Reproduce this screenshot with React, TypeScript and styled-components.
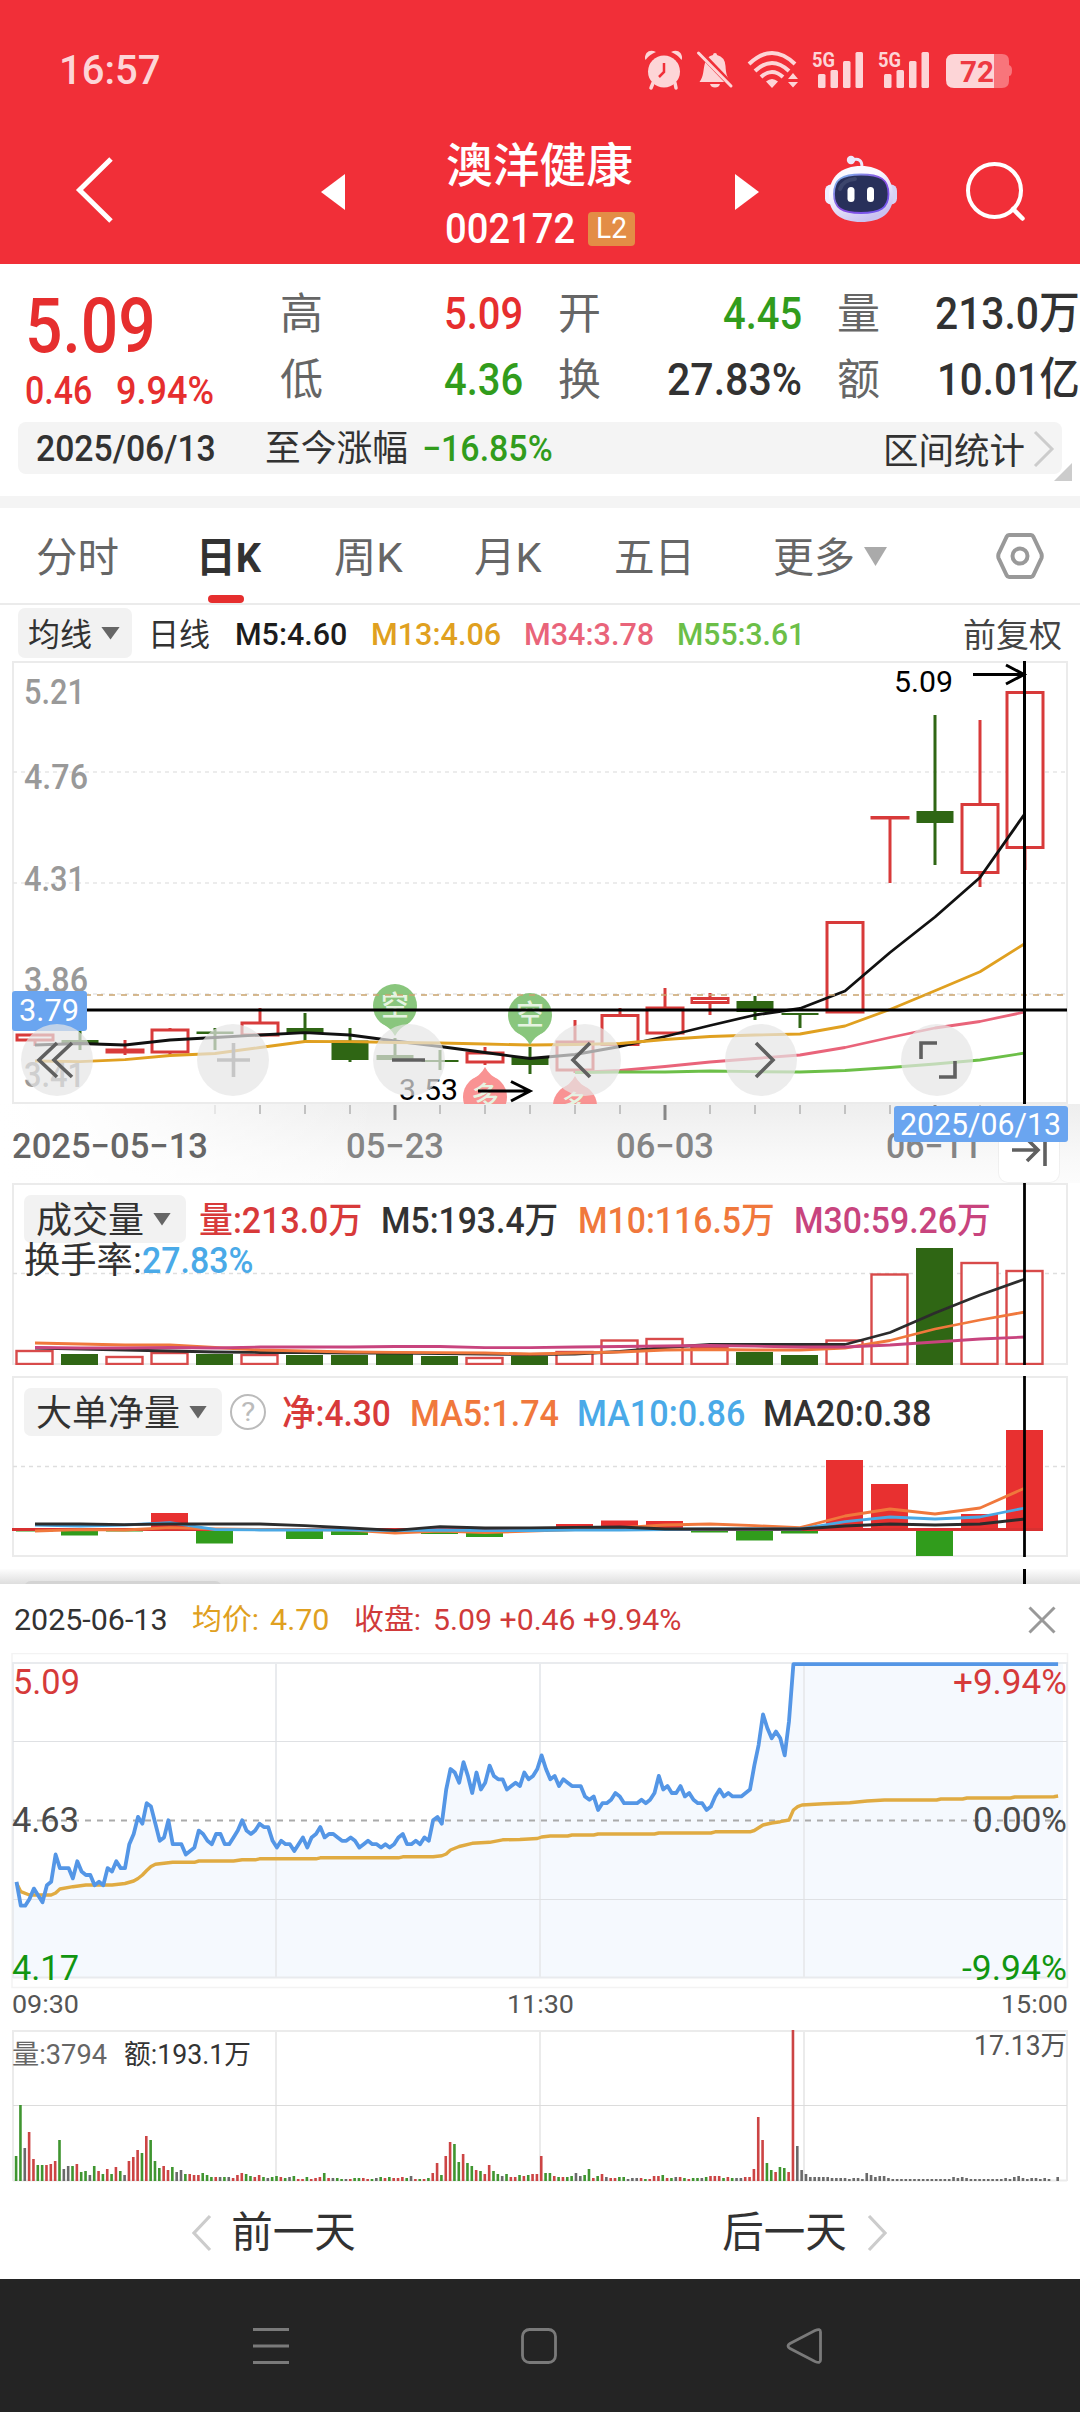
import React, { useLayoutEffect, useRef, useState } from 'react';
import styled, { createGlobalStyle } from 'styled-components';

const FONT = `Roboto, "Noto Sans CJK SC", sans-serif`;
const C = {
  red: '#e62e2e',
  line: '#d83a3a',
  green: '#319c1c',
  candle: '#2f6614',
  ink: '#323232',
  gray: '#666666',
  rule: '#ebebeb',
  blue: '#6aa5f0',
};

const Global = createGlobalStyle`
  html, body { margin: 0; padding: 0; background: #fff; }
  * { box-sizing: border-box; }
  svg { display: block; flex: none; }
`;

/* ---------- text that is condensed to a given advance width ---------- */

type FitProps = {
  w: number;
  size: number;
  weight?: number;
  color?: string;
  gap?: number;
  drop?: number;
  children: React.ReactNode;
};

const FitBox = styled.span<{ $w: number; $size: number; $gap: number; $drop: number }>`
  display: block;
  flex: none;
  width: ${(p) => p.$w}px;
  height: ${(p) => p.$size}px;
  margin-left: ${(p) => p.$gap}px;
  margin-top: ${(p) => p.$drop}px;
`;
const FitInk = styled.span<{ $size: number; $weight: number; $color: string }>`
  display: inline-block;
  font: ${(p) => p.$weight} ${(p) => p.$size}px/1 ${FONT};
  color: ${(p) => p.$color};
  white-space: pre;
  transform-origin: 0 50%;
`;

function Fit({ w, size, weight = 400, color = C.ink, gap = 0, drop = 0, children }: FitProps) {
  const ref = useRef<HTMLSpanElement>(null);
  const [scale, setScale] = useState(1);
  useLayoutEffect(() => {
    if (ref.current) setScale(w / ref.current.offsetWidth);
  }, [w, size, weight]);
  return (
    <FitBox $w={w} $size={size} $gap={gap} $drop={drop}>
      <FitInk ref={ref} $size={size} $weight={weight} $color={color} style={{ transform: `scaleX(${scale})` }}>
        {children}
      </FitInk>
    </FitBox>
  );
}

type LabelProps = {
  x: number;
  y: number;
  size: number;
  len: number;
  color: string;
  weight?: number;
  children: string;
};
const Label = ({ x, y, size, len, color, weight = 400, children }: LabelProps) => (
  <text
    x={x}
    y={y}
    fill={color}
    fontFamily={FONT}
    fontSize={size}
    fontWeight={weight}
    textLength={len}
    lengthAdjust="spacingAndGlyphs"
  >
    {children}
  </text>
);

/* ---------- layout ---------- */

const Page = styled.div`
  width: 1080px;
  height: 2412px;
  display: flex;
  flex-direction: column;
  overflow: hidden;
  background: #fff;
`;
const Header = styled.header`
  flex: none;
  height: 264px;
  background: #f12f38;
`;
const StatusBar = styled.div`
  height: 140px;
  padding: 0 52px 0 59px;
  display: flex;
  align-items: center;
  justify-content: space-between;
`;
const Toolbar = styled.div`
  height: 124px;
  padding: 0 50px 0 72px;
  display: flex;
  align-items: flex-start;
`;
const ToolIcon = styled.svg<{ $ml?: number; $mt: number }>`
  margin-left: ${(p) => p.$ml ?? 0}px;
  margin-top: ${(p) => p.$mt}px;
`;
const Title = styled.div`
  width: 190px;
  margin-left: 100px;
  display: flex;
  flex-direction: column;
`;
const CodeRow = styled.div`
  height: 34px;
  margin-top: 22px;
  display: flex;
  align-items: center;
`;
const Badge = styled.span`
  width: 48px;
  height: 34px;
  margin-left: 13px;
  border-radius: 4px;
  background: #e38d46;
  display: flex;
  align-items: center;
  justify-content: center;
`;

const Quote = styled.section`
  flex: none;
  height: 232px;
  display: grid;
  grid-template-columns: 280px 1fr;
  grid-template-rows: 158px 52px;
`;
const LastPrice = styled.div`
  padding: 24px 0 0 25px;
`;
const Change = styled.div`
  display: flex;
  margin-top: 8px;
`;
const Stats = styled.div`
  padding-top: 25px;
  display: grid;
  grid-template-columns: 278px 279px 243px;
  grid-auto-rows: 48px;
  row-gap: 18px;
`;
const Stat = styled.div<{ $pad: number }>`
  display: flex;
  align-items: center;
  justify-content: space-between;
  padding-right: ${(p) => p.$pad}px;
`;
const RangeBar = styled.div`
  grid-column: 1 / 3;
  margin: 0 18px;
  padding: 0 7px 0 18px;
  border-radius: 8px;
  background: #f4f4f4;
  display: flex;
  align-items: center;
`;
const Spring = styled.i`
  flex: 1;
`;
const Fold = styled.i`
  grid-column: 2;
  justify-self: end;
  width: 18px;
  height: 18px;
  margin: -11px 8px 0 0;
  background: #ccc;
  clip-path: polygon(100% 0, 100% 100%, 0 100%);
`;
const Separator = styled.div`
  flex: none;
  height: 12px;
  background: #f4f4f4;
`;

const Tabs = styled.nav`
  flex: none;
  height: 97px;
  padding-left: 36px;
  display: flex;
  border-bottom: 2px solid #ebebeb;
`;
const Tab = styled.div<{ $w: number }>`
  width: ${(p) => p.$w}px;
  padding-top: 30px;
  display: flex;
`;
const ActiveTab = styled(Tab)`
  flex-direction: column;
  &::after {
    content: '';
    width: 36px;
    height: 9px;
    margin: 16px 0 0 12px;
    border-radius: 5px;
    background: ${C.red};
  }
`;
const Caret = styled.i<{ $w: number; $h: number; $color: string; $ml: number; $mt?: number }>`
  flex: none;
  width: ${(p) => p.$w}px;
  height: ${(p) => p.$h}px;
  margin-left: ${(p) => p.$ml}px;
  margin-top: ${(p) => p.$mt ?? 0}px;
  background: ${(p) => p.$color};
  clip-path: polygon(0 0, 100% 0, 50% 100%);
`;
const MaRow = styled.div`
  flex: none;
  height: 56px;
  padding: 0 18px 0 18px;
  display: flex;
  align-items: center;
`;
const Picker = styled.button<{ $w: number; $h: number; $pad: number }>`
  flex: none;
  width: ${(p) => p.$w}px;
  height: ${(p) => p.$h}px;
  padding: 0 0 0 ${(p) => p.$pad}px;
  border: 0;
  border-radius: 7px;
  background: #f2f2f2;
  display: flex;
  align-items: center;
`;

const Panel = styled.section<{ $h: number; $mb?: number }>`
  flex: none;
  height: ${(p) => p.$h}px;
  margin-bottom: ${(p) => p.$mb ?? 0}px;
  display: grid;
  overflow: hidden;
  & > * {
    grid-area: 1 / 1;
  }
`;
const Tools = styled.div`
  align-self: end;
  height: 72px;
  margin: 0 0 8px 21px;
  display: flex;
  gap: 104px;
`;
const RoundButton = styled.button`
  width: 72px;
  height: 72px;
  padding: 0;
  border: 0;
  border-radius: 50%;
  background: rgba(229, 229, 229, 0.7);
`;
const Legend = styled.div`
  z-index: 1;
  padding: 12px 0 0 24px;
`;
const LegendRow = styled.div<{ $h: number }>`
  height: ${(p) => p.$h}px;
  display: flex;
  align-items: center;
`;
const Help = styled.span`
  width: 36px;
  height: 36px;
  margin-left: 8px;
  border: 2.5px solid #bbb;
  border-radius: 50%;
  display: flex;
  align-items: center;
  justify-content: center;
`;
const Peek = styled.div`
  flex: none;
  height: 15px;
  padding: 12px 54px 0 24px;
  overflow: hidden;
  background: linear-gradient(#fdfdfd, #dedede);
  display: flex;
  justify-content: space-between;
`;
const PeekTitle = styled.i`
  width: 198px;
  height: 20px;
  border-radius: 7px;
  background: #d4d4d4;
`;
const PeekLine = styled.i`
  width: 3px;
  height: 15px;
  margin-top: -12px;
  background: #000;
`;

const Sheet = styled.section`
  flex: none;
  height: 695px;
  background: #fff;
`;
const SheetHead = styled.div`
  height: 69px;
  padding: 0 24px 0 14px;
  display: flex;
  align-items: center;
`;
const DayNav = styled.div`
  height: 97px;
  padding: 5px 193px 0 192px;
  display: flex;
  align-items: center;
  justify-content: space-between;
`;
const DayButton = styled.button`
  padding: 0;
  border: 0;
  background: none;
  display: flex;
  align-items: center;
`;
const SystemBar = styled.footer`
  flex: 1;
  padding-left: 250px;
  padding-right: 255px;
  background: #242424;
  display: flex;
  align-items: center;
  justify-content: space-between;
`;

/* ---------- daily chart data ---------- */

const cx = (i: number) => 35 + 45 * i;
const path = (ys: number[], from = 0) => ys.map((y, i) => `${i ? 'L' : 'M'}${cx(i + from)} ${y}`).join('');

type Candle = [up: 0 | 1, top: number, bottom: number, high: number, low: number];
const candles: Candle[] = [
  [1, 1035, 1040, 1035, 1046], [0, 1040, 1043, 1025, 1050], [1, 1050, 1052, 1040, 1055],
  [1, 1030, 1052, 1028, 1055], [0, 1031.5, 1034, 1028, 1050], [1, 1023, 1035, 1008, 1035],
  [0, 1028, 1033, 1013, 1041], [0, 1040.5, 1060, 1028, 1062], [0, 1055, 1060, 1038, 1060],
  [0, 1060, 1062, 1050, 1070], [1, 1053, 1062, 1047, 1065], [0, 1057, 1065, 1047, 1074],
  [1, 1042, 1070, 1020, 1073], [1, 1015.5, 1044.5, 1008, 1044], [1, 1008, 1033, 988, 1033],
  [1, 998.5, 1002.5, 993, 1015], [0, 1001, 1012, 996, 1020], [0, 1013, 1015, 1013, 1028],
  [1, 922.5, 1012, 922.5, 1012], [1, 817.5, 818, 817, 883], [0, 811, 823, 715, 865],
  [1, 804.5, 872.5, 720, 887], [1, 692.5, 847.5, 692, 870],
];
const ma5 = [1045, 1043.5, 1045, 1040, 1037.5, 1035, 1032.7, 1035, 1041, 1046.5, 1052.5, 1058.5, 1054.5, 1046.5, 1036.5, 1025.5, 1015, 1008.5, 991, 952.5, 917, 877.5, 813.5];
const ma13 = [1061, 1061.7, 1059.7, 1055.5, 1053.5, 1047.5, 1041.5, 1041.7, 1042.5, 1043, 1044, 1045, 1044.5, 1043.5, 1039.5, 1036.5, 1035, 1034, 1026, 1009.5, 990.7, 971.7, 943.5];
const ma34 = [1072.5, 1070.5, 1066.5, 1062, 1058.5, 1055, 1047.5, 1037.5, 1028, 1021.5, 1012];
const ma55 = [1072.5, 1072, 1072, 1071, 1071.7, 1072, 1070.5, 1067.5, 1064, 1060, 1053];

const volumes: [0 | 1, number][] = [
  [1, 1350], [0, 1354], [1, 1356], [1, 1352], [0, 1354], [1, 1354], [0, 1355], [0, 1355], [0, 1354], [0, 1356],
  [1, 1357], [0, 1356], [1, 1351], [1, 1339.5], [1, 1338], [1, 1347], [0, 1352], [0, 1355], [1, 1339.5], [1, 1273.5],
  [0, 1248], [1, 1262], [1, 1270],
];
const vol5 = [1348, 1349, 1350, 1351, 1352, 1352.5, 1352.7, 1353, 1353, 1353.5, 1354, 1354.5, 1354, 1351.5, 1347.5, 1344.5, 1344.5, 1344.5, 1344.5, 1332.5, 1313, 1295, 1279];
const vol10 = [1343, 1344, 1345, 1345, 1347.5, 1350, 1351, 1352, 1352.3, 1352.7, 1353, 1354, 1353, 1352, 1350, 1349.5, 1350, 1350, 1348, 1340.5, 1329, 1320, 1312];
const vol30 = [1347.5, 1348, 1348, 1347.5, 1348, 1347, 1347, 1347, 1346.5, 1346.5, 1347.7, 1347.7, 1347, 1346.5, 1346, 1345.5, 1346.2, 1347, 1347, 1345, 1342, 1339, 1337];

const ZERO = 1529.5;
const nets = [1531.5, 1535.5, 1531.5, 1513, 1543.5, 1529, 1539, 1535, 1530, 1534, 1537, 1532, 1524, 1520.5, 1521, 1532.5, 1540.5, 1533.5, 1460, 1484, 1556, 1514, 1430];
const net5 = [1531, 1529.7, 1530, 1527.7, 1529, 1529.5, 1529.7, 1530, 1533, 1531, 1532.7, 1531, 1529.5, 1527.7, 1525, 1524, 1525.7, 1527.7, 1516, 1509, 1514, 1508, 1488];
const net10 = [1525, 1526, 1525, 1522.7, 1529.5, 1530, 1530, 1530, 1530.7, 1530, 1530.7, 1530.5, 1530, 1530, 1529.5, 1529, 1529, 1529, 1521.7, 1517, 1519, 1517, 1508];
const net20 = [1524, 1524, 1524.7, 1524, 1524, 1524, 1525.7, 1528, 1530.3, 1526.7, 1528, 1527.8, 1527.3, 1527, 1529, 1529, 1529, 1529, 1526, 1524, 1525, 1524, 1519];

const Frame = ({ top, bottom, dash }: { top: number; bottom: number; dash?: number }) => (
  <>
    <rect x={13} y={top} width={1054} height={bottom - top} fill="none" stroke={C.rule} strokeWidth={2} />
    {dash && <path d={`M13 ${dash}H1067`} stroke="#dedede" strokeWidth={1.3} strokeDasharray="4 4" />}
  </>
);

const Pin = ({ x, y, tip, color, text }: { x: number; y: number; tip: number; color: string; text: string }) => (
  <g opacity={0.92}>
    <circle cx={x} cy={y} r={22} fill={color} />
    <path d={tip > y ? `M${x - 15} ${y + 16}Q${x - 4} ${tip - 8} ${x} ${tip}Q${x + 4} ${tip - 8} ${x + 15} ${y + 16}Z` : `M${x - 15} ${y - 16}Q${x - 4} ${tip + 8} ${x} ${tip}Q${x + 4} ${tip + 8} ${x + 15} ${y - 16}Z`} fill={color} />
    <Label x={x - 14} y={y + 10} size={28} len={28} color="#e4f3df" weight={500}>{text}</Label>
  </g>
);

function DailyChart() {
  return (
    <svg width={1080} height={443} viewBox="0 661 1080 443">
      <Frame top={662} bottom={1103} />
      {[772, 883, 994].map((y) => (
        <path key={y} d={`M13 ${y}H1067`} stroke="#e6e6e6" strokeWidth={1.6} strokeDasharray="4 4" />
      ))}
      <Label x={24} y={704} size={35} len={61} color="#999" weight={500}>5.21</Label>
      <Label x={24} y={789} size={35} len={64} color="#999" weight={500}>4.76</Label>
      <Label x={24} y={891} size={35} len={61} color="#999" weight={500}>4.31</Label>
      <Label x={24} y={992} size={35} len={64} color="#999" weight={500}>3.86</Label>
      <Label x={24} y={1087} size={35} len={61} color="#999" weight={500}>3.41</Label>
      {candles.map(([up, top, bottom, high, low], i) =>
        up ? (
          <g key={i} stroke={C.line} strokeWidth={3} fill="none">
            <path d={`M${cx(i)} ${high}V${top}M${cx(i)} ${bottom}V${low}`} />
            <rect x={cx(i) - 18} y={top} width={36} height={bottom - top} fill="#fff" />
          </g>
        ) : (
          <g key={i} fill={C.candle}>
            <rect x={cx(i) - 1.5} y={high} width={3} height={low - high} />
            <rect x={cx(i) - 18.5} y={top} width={37} height={bottom - top} />
          </g>
        ),
      )}
      <g fill="none" strokeWidth={2.8} strokeLinejoin="round">
        <path d={path(ma5)} stroke="#111" />
        <path d={path(ma13)} stroke="#e0a020" />
        <path d={path(ma34, 12)} stroke="#e9647a" />
        <path d={path(ma55, 12)} stroke="#6cbf48" />
      </g>
      <Pin x={395} y={1006} tip={1036} color="#80c272" text="空" />
      <Pin x={530} y={1015} tip={1045} color="#80c272" text="空" />
      <Pin x={485} y={1097} tip={1067} color="#f98a8a" text="多" />
      <Pin x={575} y={1106} tip={1076} color="#f98a8a" text="多" />
      <path d="M13 995H1067" stroke="#c9a26c" strokeWidth={1.6} strokeDasharray="6 6" />
      <Label x={399} y={1100} size={29} len={59} color="#000">3.53</Label>
      <Label x={894} y={692} size={30} len={59} color="#000">5.09</Label>
      <g fill="none" stroke="#000" strokeWidth={3}>
        <path d="M478 1091H530M511 1081.500L530 1091L511 1101" />
        <path d="M973 674.500H1023M1006 665L1024 674.500L1006 684" />
        <path d="M84 1010H1067" />
        <path d="M1024.500 661V1104" />
      </g>
      <rect x={12} y={991} width={75} height={40} rx={3} fill={C.blue} />
      <Label x={19} y={1021} size={31} len={60} color="#fff">3.79</Label>
    </svg>
  );
}

const toolIcons: [string, string][] = [
  ['M36 19L18 36L36 53M51 19L33 36L51 53', '#606060'],
  ['M20 36H53M36.500 19V53', '#c6c6c6'],
  ['M19 36H52', '#606060'],
  ['M41 19L24 36L41 53', '#606060'],
  ['M31 19L48 36L31 53', '#606060'],
  ['M20 35V19H36M38 53H54V37', '#606060'],
];

function DateAxis() {
  return (
    <svg width={1080} height={79} viewBox="0 1104 1080 79">
      <defs>
        <linearGradient id="shade" x1="0" y1="0" x2="0" y2="1">
          <stop offset="0" stopColor="#eeeeee" />
          <stop offset="0.7" stopColor="#f9f9f9" />
          <stop offset="1" stopColor="#fcfcfc" />
        </linearGradient>
        <linearGradient id="fade" x1="0" y1="0" x2="1" y2="0">
          <stop offset="0" stopColor="#fff" />
          <stop offset="0.08" stopColor="#fff" stopOpacity="0.9" />
          <stop offset="0.35" stopColor="#fff" stopOpacity="0" />
        </linearGradient>
      </defs>
      <rect x={0} y={1104} width={1080} height={79} fill="url(#shade)" />
      <rect x={0} y={1104} width={1080} height={79} fill="url(#fade)" />
      {Array.from({ length: 18 }, (_, k) => k + 4).map((i) => {
        const major = i === 8 || i === 14 || i === 20;
        return (
          <path
            key={i}
            d={`M${cx(i)} 1105V${major ? 1120 : 1114}`}
            stroke={major ? '#888' : i === 4 ? '#e6e6e6' : '#c2c2c2'}
            strokeWidth={major ? 3 : 2}
          />
        );
      })}
      <Label x={12} y={1158} size={35} len={196} color="#666" weight={500}>2025−05−13</Label>
      <Label x={346} y={1158} size={35} len={98} color="#858585" weight={500}>05−23</Label>
      <Label x={616} y={1158} size={35} len={98} color="#858585" weight={500}>06−03</Label>
      <Label x={886} y={1158} size={35} len={96} color="#858585" weight={500}>06−11</Label>
      <rect x={998} y={1124} width={62} height={59} rx={10} fill="#000" opacity={0.04} />
      <rect x={999} y={1124} width={60} height={58} rx={9} fill="#fff" />
      <path d="M1012 1150H1036M1027 1139L1038 1150L1027 1161M1045 1134V1166" fill="none" stroke="#606060" strokeWidth={3.6} />
      <rect x={894} y={1106} width={174} height={36} rx={3} fill={C.blue} />
      <Label x={900} y={1135} size={31} len={161} color="#fff">2025/06/13</Label>
    </svg>
  );
}

function VolumeChart() {
  return (
    <svg width={1080} height={182} viewBox="0 1183 1080 182">
      <Frame top={1184} bottom={1364} dash={1273.5} />
      {volumes.map(([up, top], i) =>
        up ? (
          <rect key={i} x={cx(i) - 18.5} y={top + 1} width={36} height={1363 - top} fill="#fff" stroke="#d84a4a" strokeWidth={2.4} />
        ) : (
          <rect key={i} x={cx(i) - 19} y={top} width={37} height={1365 - top} fill={C.candle} />
        ),
      )}
      <g fill="none" strokeWidth={2.8} strokeLinejoin="round">
        <path d={path(vol5)} stroke="#2c2c2c" />
        <path d={path(vol10)} stroke="#f0783c" />
        <path d={path(vol30)} stroke="#c8447e" />
        <path d="M1024.500 1183V1365" stroke="#000" />
      </g>
    </svg>
  );
}

function NetChart() {
  return (
    <svg width={1080} height={181} viewBox="0 1376 1080 181">
      <Frame top={1377} bottom={1556} dash={1466.5} />
      {nets.map((v, i) => (
        <rect
          key={i}
          x={cx(i) - 19}
          y={Math.min(v, ZERO)}
          width={37}
          height={Math.abs(v - ZERO)}
          fill={v < ZERO ? '#e83030' : C.green}
        />
      ))}
      <path d={`M12 ${ZERO}H1043`} stroke="#d83030" strokeWidth={3} />
      <g fill="none" strokeWidth={2.8} strokeLinejoin="round">
        <path d={path(net5)} stroke="#f0783c" />
        <path d={path(net10)} stroke="#4aa8e4" />
        <path d={path(net20)} stroke="#2c2c2c" />
        <path d="M1024.500 1376V1557" stroke="#000" />
      </g>
    </svg>
  );
}

/* ---------- intraday data: minutes after the open ---------- */

const PREV_CLOSE = 4.63;
const mx = (k: number) => 16.5 + 4.34 * k;
const py = (cents: number) => 1820.3 - cents * 3.417;
/* cents above the previous close, until the price limit is reached */
const moves = [
  -18, -25, -25, -23, -20, -22, -24, -19, -18, -10, -14, -14, -14, -17, -12, -15, -16, -16, -19, -18,
  -19, -14, -15, -12, -14, -14, -7, -4, 1, -1, 5, 4, -1, -6, -5, 0, -7, -7, -7, -10,
  -9, -8, -3, -4, -6, -7, -4, -4, -7, -7, -5, -3, 0, -3, -4, -3, -1, -2, -2, -6,
  -8, -6, -7, -7, -9, -7, -5, -8, -5, -4, -2, -5, -4, -4, -5, -6, -6, -5, -6, -8,
  -7, -6, -7, -7, -8, -7, -8, -7, -5, -4, -7, -7, -6, -7, -5, -6, 0, 1, -1, 9,
  15, 14, 11, 17, 13, 8, 14, 9, 11, 16, 13, 12, 12, 9, 10, 11, 10, 14, 12, 13,
  15, 19, 15, 12, 13, 10, 12, 11, 10, 10, 10, 7, 6, 7, 3, 5, 5, 6, 8, 7,
  5, 5, 5, 5, 6, 5, 6, 8, 13, 9, 10, 8, 8, 10, 7, 8, 6, 5, 5, 3,
  4, 7, 9, 7, 8, 7, 7, 7, 8, 9, 16, 22, 31, 27, 24, 26, 24, 19, 29, 45.7,
];
const priceLine = moves.map((m, k) => `${k ? 'L' : 'M'}${mx(k).toFixed(1)} ${py(m).toFixed(1)}`).join('') + `H${mx(240)}`;
const average: [number, number][] = [
  [0, 1883], [1, 1891.7], [3, 1895], [8, 1895], [9, 1893], [10, 1889], [13, 1886.7], [16, 1885], [22, 1885], [25, 1883.5],
  [27, 1881], [28, 1878.5], [29, 1875], [30, 1870.5], [31, 1866.5], [32, 1864.3], [36, 1862.3], [41, 1862.3], [42, 1861], [50, 1861],
  [52, 1859.8], [55, 1859.8], [56, 1858.8], [69, 1858.8], [70, 1857.8], [88, 1857.8], [89, 1856.8], [96, 1856.8], [98, 1855.8],
  [99, 1854], [100, 1850], [102, 1846.5], [105, 1843.3], [109, 1842.3], [112, 1839.8], [116, 1839.5], [120, 1838.5], [121, 1837],
  [123, 1836], [127, 1836], [128, 1835], [133, 1835], [134, 1834], [147, 1834], [148, 1833], [160, 1833], [161, 1831.8],
  [169, 1831.8], [170, 1830.5], [172, 1825], [174, 1823], [176, 1821.7], [178, 1820], [179, 1810], [180, 1806.7], [181, 1805],
  [186, 1803.7], [192, 1802.7], [196, 1801], [200, 1800], [212, 1800], [213, 1799], [218, 1799], [219, 1798], [229, 1798],
  [230, 1797], [239, 1796.7], [240, 1796],
];
const averageLine = average.map(([k, y], i) => `${i ? 'L' : 'M'}${mx(k).toFixed(1)} ${y}`).join('');

/* one bar a minute: colour letter (r up, g down, k unchanged) and height */
const bars = (
  'g24 g75 k32 r48 r21 g15 g15 r15 r16 r19 g40 k11 k14 g14 r16 g8 g9 k5 g14 r9 ' +
  'g6 r11 g6 r13 g9 k5 r19 r23 r30 g27 r44 g40 g19 g12 r14 r10 g13 k8 k10 g6 ' +
  'r6 r5 r5 g7 g5 g3 r3 k3 g3 k3 r2 r5 r7 g6 g4 r3 r5 g3 k2 g3 ' +
  'g4 r3 g2 k3 g4 r1 r1 g3 r1 r2 r3 g7 r2 k2 g2 g1 k1 r1 g2 g2 ' +
  'r2 r1 g1 k2 g3 r2 g3 r2 r2 r3 g2 k4 r1 g1 r1 g2 r7 r17 g5 r24 ' +
  'r38 g36 g18 r26 g17 g14 r10 g9 r6 r15 g9 g6 k4 g6 r3 r3 g5 r4 g5 r6 ' +
  'r6 r24 g7 g7 r4 g3 r3 g3 g4 k7 k4 g5 g11 r2 g4 r6 k3 r2 r2 g3 ' +
  'g3 k1 k2 k2 r2 g1 r1 r4 r4 g5 r2 g2 k3 r3 g2 r1 g2 g2 k2 g3 ' +
  'r4 r4 r4 g2 r3 g2 k2 k2 r3 r3 r11 r63 r40 g17 g10 r8 g13 g12 r8 r150 ' +
  'k34 k10 k6 k3 k3 k3 k3 k3 k2 k2 k2 k2 k1 k2 k2 k1 k7 k5 k3 k4 ' +
  'k4 k2 k1 k1 k1 k1 k1 k1 k1 k1 k1 k1 k1 k1 k1 k1 k3 k2 k3 k2 ' +
  'k1 k1 k1 k1 k1 k1 k1 k1 k2 k1 k3 k4 k2 k1 k2 k2 k1 k2 k1 k0 k3'
).split(' ');
const barColor: Record<string, string> = { r: '#cc4444', g: '#3f9530', k: '#6a6a6a' };

function IntradayChart() {
  return (
    <svg width={1080} height={376} viewBox="0 1653 1080 376">
      <rect x={12} y={1653.5} width={1055.500} height={334} fill="none" stroke="#f3f3f3" strokeWidth={1.5} />
      <path d={`${priceLine}L1063 ${py(45.7)}V1978H13V1883Z`} fill="#f5f9fe" />
      <path d="M13 1663H1067M13 1977.500H1067M13 1662V1978M276 1662V1978M540 1662V1978M804 1662V1978M1067 1662V1978" stroke="#e9ebee" strokeWidth={2} />
      <path d="M13 1741.500H1067M13 1899.500H1067" stroke="#dfe1e4" strokeWidth={1.2} />
      <path d="M13 1820.500H1067" stroke="#aaa" strokeWidth={1.8} strokeDasharray="6 6" />
      <g fill="none" strokeLinejoin="round">
        <path d={averageLine} stroke="#e0ab42" strokeWidth={3.4} />
        <path d={priceLine} stroke="#5496e6" strokeWidth={3.8} />
      </g>
      <Label x={13} y={1694} size={35} len={67} color="#d63a3a">5.09</Label>
      <Label x={12} y={1831.7} size={35} len={67} color="#4a4a4a">{PREV_CLOSE.toFixed(2)}</Label>
      <Label x={12} y={1980} size={35} len={67} color="#119611">4.17</Label>
      <Label x={953} y={1694} size={35} len={114} color="#d63a3a">+9.94%</Label>
      <Label x={973} y={1831.7} size={35} len={94} color="#4a4a4a">0.00%</Label>
      <Label x={962} y={1980} size={35} len={105} color="#119611">-9.94%</Label>
      <Label x={12} y={2013} size={26.5} len={67} color="#555">09:30</Label>
      <Label x={507} y={2013} size={26.5} len={67} color="#555">11:30</Label>
      <Label x={1001} y={2013} size={26.5} len={67} color="#555">15:00</Label>
    </svg>
  );
}

function MinuteVolumeChart() {
  return (
    <svg width={1080} height={153} viewBox="0 2029 1080 153">
      <path d="M13 2031H1067M13 2180.500H1067M13 2030V2181M276 2030V2181M540 2030V2181M804 2030V2181M1067 2030V2181" stroke={C.rule} strokeWidth={2} />
      <path d="M13 2105.500H1067" stroke="#dcdcdc" strokeWidth={1.2} />
      {bars.map((b, k) => {
        const h = Number(b.slice(1));
        return h > 0 && <rect key={k} x={mx(k) - 1.7} y={2180 - h} width={2.6} height={h + 1} fill={barColor[b[0]]} />;
      })}
      <Label x={12} y={2064} size={27} len={95} color="#666">量:3794</Label>
      <Label x={124} y={2064} size={27} len={127} color="#333">额:193.1万</Label>
      <Label x={974} y={2055} size={27} len={93} color="#555">17.13万</Label>
    </svg>
  );
}

/* ---------- icons ---------- */

const Signal = ({ x }: { x: number }) => (
  <g>
    <Label x={x} y={66.500} size={20.5} len={23} color="#fdd5d7" weight={700}>5G</Label>
    <rect x={x + 6} y={74} width={7.5} height={14} rx={1.5} />
    <rect x={x + 18.500} y={70} width={7.5} height={18} rx={1.5} />
    <rect x={x + 31} y={61} width={7.5} height={27} rx={1.5} />
    <rect x={x + 43.500} y={52} width={7.5} height={36} rx={1.5} />
  </g>
);

const StatusIcons = () => (
  <svg width={384} height={44} viewBox="644 48 384 44" fill="#fdd5d7">
    <circle cx={664} cy={71.500} r={16} />
    <path d="M653 83L651 88M675 83L676 88" stroke="#fdd5d7" strokeWidth={3.500} strokeLinecap="round" />
    <path d="M645.500 60A22 22 0 0 1 656 52Q650 49 646.500 53Q644 57 645.500 60ZM681.500 60A22 22 0 0 0 671 52Q677 49 680.500 53Q683 57 681.500 60Z" />
    <path d="M664 63V72L659 77" fill="none" stroke="#f12f38" strokeWidth={2.500} />
    <path d="M699.500 82C704 76 703 70 705 63Q707 56 713 55Q713 53 715 53Q717 53 717 55Q725 57 725.500 66C726 74 727 77 730.500 82Z" />
    <path d="M710 84H720Q719 87.500 715 87.500Q711 87.500 710 84Z" />
    <path d="M700 52.500L733 87" stroke="#f12f38" strokeWidth={6} />
    <path d="M698.500 53L731 86" stroke="#fdd5d7" strokeWidth={3} strokeLinecap="round" />
    <g fill="none" stroke="#fdd5d7" strokeWidth={4}>
      <path d="M749 64Q772 42 795 64" />
      <path d="M755 71Q772 55 789 71" />
      <path d="M761 77Q772 67 783 77" />
    </g>
    <path d="M766 81.500Q772 76.500 778 81.500L772 88ZM788 79L793 73L798 79ZM788 82H798L793 87.500Z" />
    <Signal x={812} />
    <Signal x={878} />
    <path d="M955 54H1002Q1009 54 1009 61V65Q1012 66 1012 70Q1012 76 1009 76V81Q1009 88 1002 88H955Z" fill="#f8757b" />
    <path d="M994 54H954Q946 54 946 62V80Q946 88 954 88H994Z" />
    <Label x={960} y={82} size={29} len={34} color="#ee3a42" weight={700}>72</Label>
  </svg>
);

const Robot = () => (
  <ToolIcon $ml={64} $mt={14} width={76} height={70} viewBox="823 154 76 70">
    <defs>
      <linearGradient id="shell" x1="0" y1="0" x2="0.5" y2="1">
        <stop offset="0.4" stopColor="#fbf9ff" />
        <stop offset="1" stopColor="#c9c2f0" />
      </linearGradient>
      <linearGradient id="rim" x1="0" y1="0" x2="1" y2="1">
        <stop offset="0" stopColor="#7fc4ee" />
        <stop offset="0.5" stopColor="#8a4be0" />
        <stop offset="1" stopColor="#6a5af0" />
      </linearGradient>
    </defs>
    <path d="M852 160Q862 157 862 167" fill="none" stroke="#ece8fb" strokeWidth={3} />
    <circle cx={851} cy={160} r={4.200} fill="#ece8fb" />
    <rect x={825} y={184.500} width={12} height={20} rx={6} fill="#f0edff" />
    <rect x={885} y={184.500} width={12} height={20} rx={6} fill="#d6d2f4" />
    <path d="M829 196C829 176 842 166 861 166C880 166 893 176 893 196C893 213 881 222 861 222C841 222 829 213 829 196Z" fill="url(#shell)" />
    <path d="M834 194C834 179 842 174.500 861 174.500C880 174.500 888.500 179 888.500 194C888.500 208 880 213 861 213C842 213 834 208 834 194Z" fill="#28305a" stroke="url(#rim)" strokeWidth={1.8} />
    <path d="M840 189Q843 180 855 179" fill="none" stroke="#4a5478" strokeWidth={4} opacity={0.6} strokeLinecap="round" />
    <rect x={847.500} y={187} width={7} height={15} rx={3.500} fill="#fff" />
    <rect x={867} y={187} width={7} height={15} rx={3.500} fill="#fff" />
  </ToolIcon>
);

/* ---------- page ---------- */

const stats: [string, string, number, string, number][] = [
  ['高', '5.09', 79, C.red, 35],
  ['开', '4.45', 79, C.green, 35],
  ['量', '213.0万', 145, C.ink, 0],
  ['低', '4.36', 79, C.green, 35],
  ['换', '27.83%', 135, C.ink, 35],
  ['额', '10.01亿', 143, C.ink, 0],
];

export default function App() {
  return (
    <Page>
      <Global />
      <Header>
        <StatusBar>
          <Fit w={101} size={40} weight={500} color="#fdd5d7" drop={1}>16:57</Fit>
          <StatusIcons />
        </StatusBar>
        <Toolbar>
          <ToolIcon $mt={15} width={44} height={70} viewBox="72 155 44 70">
            <path d="M111 159L79.500 190L111 221" fill="none" stroke="#fff" strokeWidth={5} />
          </ToolIcon>
          <ToolIcon $ml={205} $mt={34} width={24} height={36} viewBox="0 0 24 36">
            <path d="M24 0V36L0 18Z" fill="#fff" />
          </ToolIcon>
          <Title>
            <Fit w={187} size={46.5} weight={500} color="#fff" gap={1} drop={3}>澳洋健康</Fit>
            <CodeRow>
              <Fit w={130} size={42} weight={500} color="#fff" drop={1}>002172</Fit>
              <Badge>
                <Fit w={31} size={29} color="#fff">L2</Fit>
              </Badge>
            </CodeRow>
          </Title>
          <ToolIcon $ml={100} $mt={34} width={24} height={36} viewBox="0 0 24 36">
            <path d="M0 0V36L24 18Z" fill="#fff" />
          </ToolIcon>
          <Robot />
          <ToolIcon $ml={66} $mt={20} width={64} height={64} viewBox="965 160 64 64">
            <circle cx={994.500} cy={190.500} r={26.500} fill="none" stroke="#fff" strokeWidth={4} />
            <path d="M1013 209L1022.500 218.500" stroke="#fff" strokeWidth={4.500} strokeLinecap="round" />
          </ToolIcon>
        </Toolbar>
      </Header>

      <Quote>
        <LastPrice>
          <Fit w={131} size={76} weight={500} color={C.red}>5.09</Fit>
          <Change>
            <Fit w={67} size={39} weight={500} color={C.red}>0.46</Fit>
            <Fit w={98} size={39} weight={500} color={C.red} gap={24}>9.94%</Fit>
          </Change>
        </LastPrice>
        <Stats>
          {stats.map(([name, value, w, color, pad]) => (
            <Stat key={name} $pad={pad}>
              <Fit w={43} size={43} color={C.gray} drop={3}>{name}</Fit>
              <Fit w={w} size={45} weight={500} color={color} drop={1}>{value}</Fit>
            </Stat>
          ))}
        </Stats>
        <RangeBar>
          <Fit w={180} size={36} weight={500} drop={1}>2025/06/13</Fit>
          <Fit w={143} size={36} gap={49} drop={1}>至今涨幅</Fit>
          <Fit w={131} size={36} weight={500} color={C.green} gap={14} drop={1}>−16.85%</Fit>
          <Spring />
          <Fit w={142} size={36} drop={7}>区间统计</Fit>
          <ToolIcon $ml={8} $mt={2} width={22} height={40} viewBox="0 0 22 40">
            <path d="M2 3L19 20L2 37" fill="none" stroke="#ccc" strokeWidth={3} />
          </ToolIcon>
        </RangeBar>
        <Fold />
      </Quote>
      <Separator />

      <Tabs>
        <Tab $w={160}><Fit w={83} size={41} color={C.gray}>分时</Fit></Tab>
        <ActiveTab $w={138}><Fit w={65} size={41} weight={700}>日K</Fit></ActiveTab>
        <Tab $w={140}><Fit w={69} size={41} color={C.gray}>周K</Fit></Tab>
        <Tab $w={140}><Fit w={68} size={41} color={C.gray}>月K</Fit></Tab>
        <Tab $w={159}><Fit w={81} size={41} color={C.gray}>五日</Fit></Tab>
        <Tab $w={223}>
          <Fit w={82} size={41} color={C.gray}>更多</Fit>
          <Caret $w={23} $h={19} $color="#aaa" $ml={9} $mt={9} />
        </Tab>
        <ToolIcon $mt={23} width={48} height={50} viewBox="0 0 48 50" fill="none" stroke="#999" strokeWidth={4}>
          <path d="M13 4H35Q36.500 4 37.500 6L45.500 23Q46 25 45.500 27L37.500 44Q36.500 46 35 46H13Q11.500 46 10.500 44L2.500 27Q2 25 2.500 23L10.500 6Q11.500 4 13 4Z" />
          <circle cx={24} cy={25} r={7.500} />
        </ToolIcon>
      </Tabs>
      <MaRow>
        <Picker $w={114} $h={50} $pad={10}>
          <Fit w={64} size={32} drop={4}>均线</Fit>
          <Caret $w={19} $h={13} $color="#666" $ml={9} />
        </Picker>
        <Fit w={62} size={32} gap={16} drop={4}>日线</Fit>
        <Fit w={112} size={31.5} weight={500} color="#1c1c1c" gap={25} drop={4}>M5:4.60</Fit>
        <Fit w={130} size={31.5} weight={500} color="#e0a020" gap={24} drop={4}>M13:4.06</Fit>
        <Fit w={130} size={31.5} weight={500} color="#e9647a" gap={23} drop={4}>M34:3.78</Fit>
        <Fit w={128} size={31.5} weight={500} color="#6cbf48" gap={23} drop={4}>M55:3.61</Fit>
        <Spring />
        <Fit w={99} size={33} color="#444" drop={4}>前复权</Fit>
      </MaRow>

      <Panel $h={443}>
        <DailyChart />
        <Tools>
          {toolIcons.map(([d, color]) => (
            <RoundButton key={d}>
              <svg width={72} height={72} viewBox="0 0 72 72">
                <path d={d} fill="none" stroke={color} strokeWidth={3.6} />
              </svg>
            </RoundButton>
          ))}
        </Tools>
      </Panel>
      <Panel $h={79}>
        <DateAxis />
      </Panel>
      <Panel $h={182} $mb={11}>
        <VolumeChart />
        <Legend>
          <LegendRow $h={48}>
            <Picker $w={162} $h={48} $pad={12}>
              <Fit w={108} size={36} drop={4}>成交量</Fit>
              <Caret $w={18} $h={13} $color="#666" $ml={9} />
            </Picker>
            <Fit w={163} size={36} weight={500} color={C.line} gap={13} drop={3}>量:213.0万</Fit>
            <Fit w={177} size={36} weight={500} gap={19} drop={3}>M5:193.4万</Fit>
            <Fit w={197} size={36} weight={500} color="#f0783c" gap={20} drop={3}>M10:116.5万</Fit>
            <Fit w={197} size={36} weight={500} color="#c8447e" gap={19} drop={3}>M30:59.26万</Fit>
          </LegendRow>
          <LegendRow $h={33}>
            <Fit w={118} size={36} drop={2}>换手率:</Fit>
            <Fit w={111} size={36} weight={500} color="#4aaae8" drop={2}>27.83%</Fit>
          </LegendRow>
        </Legend>
      </Panel>
      <Panel $h={181} $mb={12}>
        <NetChart />
        <Legend>
          <LegendRow $h={48}>
            <Picker $w={198} $h={48} $pad={12}>
              <Fit w={144} size={36} drop={4}>大单净量</Fit>
              <Caret $w={18} $h={13} $color="#666" $ml={9} />
            </Picker>
            <Help><Fit w={14} size={26} color="#bbb">?</Fit></Help>
            <Fit w={109} size={36} weight={500} color={C.line} gap={16} drop={3}>净:4.30</Fit>
            <Fit w={149} size={36} weight={500} color="#f0783c" gap={19} drop={3}>MA5:1.74</Fit>
            <Fit w={168} size={36} weight={500} color="#4aaae8" gap={18} drop={3}>MA10:0.86</Fit>
            <Fit w={168} size={36} weight={500} gap={18} drop={3}>MA20:0.38</Fit>
          </LegendRow>
        </Legend>
      </Panel>
      <Peek>
        <PeekTitle />
        <PeekLine />
      </Peek>

      <Sheet>
        <SheetHead>
          <Fit w={153} size={30} drop={3}>2025-06-13</Fit>
          <Fit w={67} size={29} color="#e0a020" gap={25} drop={3}>均价:</Fit>
          <Fit w={60} size={30} color="#e0a020" gap={11} drop={3}>4.70</Fit>
          <Fit w={67} size={29} color="#d03a3a" gap={24} drop={3}>收盘:</Fit>
          <Fit w={248} size={30} color="#d03a3a" gap={12} drop={3}>5.09 +0.46 +9.94%</Fit>
          <Spring />
          <ToolIcon $mt={2} width={28} height={28} viewBox="0 0 28 28">
            <path d="M1.500 1.500L26.500 26.500M26.500 1.500L1.500 26.500" stroke="#999" strokeWidth={3} />
          </ToolIcon>
        </SheetHead>
        <IntradayChart />
        <MinuteVolumeChart />
        <DayNav>
          <DayButton>
            <ToolIcon $mt={0} width={20} height={38} viewBox="0 0 20 38">
              <path d="M18 2L2 19L18 36" fill="none" stroke="#ccc" strokeWidth={3.200} />
            </ToolIcon>
            <Fit w={125} size={41.5} gap={19}>前一天</Fit>
          </DayButton>
          <DayButton>
            <Fit w={125} size={41.5}>后一天</Fit>
            <ToolIcon $ml={20} $mt={0} width={20} height={38} viewBox="0 0 20 38">
              <path d="M2 2L18 19L2 36" fill="none" stroke="#ccc" strokeWidth={3.200} />
            </ToolIcon>
          </DayButton>
        </DayNav>
      </Sheet>

      <SystemBar>
        <svg width={42} height={42} viewBox="250 2325 42 42">
          <path d="M253 2329.500H289M253 2346H289M253 2362.500H289" stroke="#7a7a7a" strokeWidth={3} />
        </svg>
        <svg width={42} height={42} viewBox="517 2325 42 42">
          <rect x={522.500} y={2329.500} width={33} height={33} rx={7} fill="none" stroke="#7a7a7a" strokeWidth={2.800} />
        </svg>
        <svg width={42} height={42} viewBox="783 2325 42 42">
          <path d="M790 2343.500L815 2330.500Q820.500 2328 820.500 2332V2360Q820.500 2364 815 2361.500L790 2348.500Q786 2346 790 2343.500Z" fill="none" stroke="#7a7a7a" strokeWidth={2.800} />
        </svg>
      </SystemBar>
    </Page>
  );
}
